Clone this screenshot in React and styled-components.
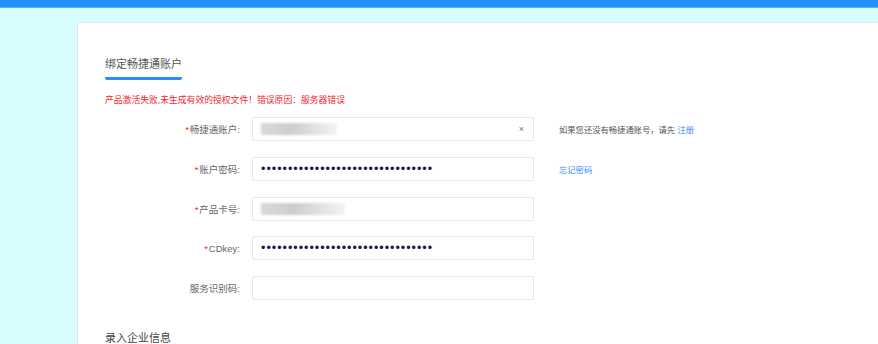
import React from 'react';
import styled, { createGlobalStyle } from 'styled-components';

const GlobalStyle = createGlobalStyle`
  html, body {
    margin: 0;
    padding: 0;
    background: #d8fdff;
    overflow: hidden;
  }
  body {
    font-family: "Liberation Sans", "Noto Sans CJK SC", sans-serif;
  }
`;

const TopBar = styled.div`
  height: 7px;
  background: #2490fb;
  border-bottom: 1px solid #5aaaf5;
`;

const Page = styled.div`
  padding: 14px 0 0 77px;
`;

const Card = styled.div`
  background: #fff;
  border: 1px solid #e2e4f6;
  border-right: none;
  padding: 31px 0 40px 27px;
  min-height: 320px;
`;

const Tab = styled.div`
  display: inline-block;
  font-size: 11px;
  line-height: 14px;
  color: #555;
  padding-bottom: 6px;
  border-bottom: 3px solid #2b8ef8;
  border-radius: 0 0 2px 2px;
`;

const ErrorText = styled.div`
  margin-top: 14px;
  font-size: 8.8px;
  line-height: 12px;
  color: #f5222d;
`;

const Form = styled.div`
  margin-top: 11px;
  display: grid;
  grid-template-columns: 135px 282px auto;
  grid-auto-rows: 24px;
  column-gap: 12px;
  row-gap: 15.75px;
  align-items: center;
`;

const Label = styled.div`
  text-align: right;
  font-size: 9.5px;
  color: #666;
  white-space: nowrap;
`;

const Star = styled.span`
  color: #f5222d;
  margin-right: 1px;
`;

const Field = styled.div`
  position: relative;
  height: 24px;
  box-sizing: border-box;
  border: 1px solid #e6e6f8;
  border-radius: 2px;
  background: #fff;
  display: flex;
  align-items: center;
  padding: 0 8px;
`;

const Masked = styled.input`
  border: none;
  outline: none;
  padding: 0;
  width: 100%;
  font-family: "Liberation Sans", sans-serif;
  font-size: 12.5px;
  letter-spacing: 1px;
  color: #151a45;
  background: transparent;
`;

const Blurred = styled.span`
  display: block;
  height: 12px;
  width: ${(p) => p.$w}px;
  background: linear-gradient(90deg, #dadada 0%, #cdcdcd 40%, #dedede 65%, #f3f3f3 100%);
  filter: blur(1.2px);
`;

const Clear = styled.span`
  position: absolute;
  right: 9px;
  top: 50%;
  transform: translateY(-52%);
  font-size: 9px;
  color: #777;
`;

const Hint = styled.div`
  margin-left: 13px;
  font-size: 8.3px;
  color: #555;
  white-space: nowrap;
`;

const Link = styled.span`
  color: #3d8df5;
`;

const Section = styled.div`
  margin-top: 31px;
  font-size: 11px;
  line-height: 14px;
  color: #444;
`;

const dots = 'x'.repeat(32);

export default function App() {
  return (
    <>
      <GlobalStyle />
      <TopBar />
      <Page>
        <Card>
          <Tab>绑定畅捷通账户</Tab>
          <ErrorText>产品激活失败,未生成有效的授权文件！错误原因：服务器错误</ErrorText>
          <Form>
            <Label><Star>*</Star>畅捷通账户:</Label>
            <Field>
              <Blurred $w={76} />
              <Clear>×</Clear>
            </Field>
            <Hint>如果您还没有畅捷通账号，请先 <Link>注册</Link></Hint>

            <Label><Star>*</Star>账户密码:</Label>
            <Field>
              <Masked type="password" value={dots} readOnly />
            </Field>
            <Hint><Link>忘记密码</Link></Hint>

            <Label><Star>*</Star>产品卡号:</Label>
            <Field>
              <Blurred $w={84} />
            </Field>
            <div />

            <Label><Star>*</Star>CDkey:</Label>
            <Field>
              <Masked type="password" value={dots} readOnly />
            </Field>
            <div />

            <Label>服务识别码:</Label>
            <Field />
            <div />
          </Form>
          <Section>录入企业信息</Section>
        </Card>
      </Page>
    </>
  );
}
